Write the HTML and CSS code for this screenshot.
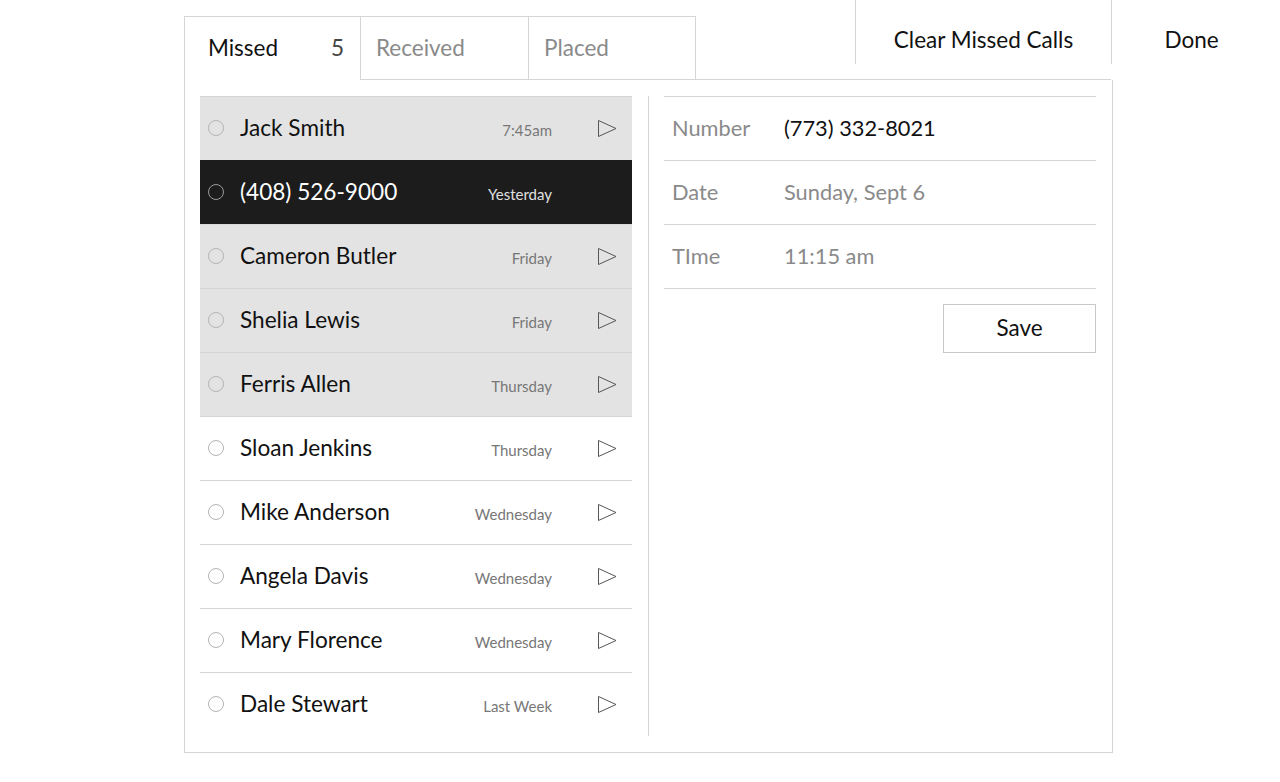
FILE: index.html
```html
<!DOCTYPE html>
<html>
<head>
<meta charset="utf-8">
<link rel="stylesheet" href="styles.css">
</head>
<body>
<div class="app">
  <div class="header">
    <div class="lead"></div>
    <div class="tab tab-active"><span>Missed</span><span class="count">5</span></div>
    <div class="tab tab-mid"><span>Received</span></div>
    <div class="tab tab-last"><span>Placed</span></div>
    <div class="spacer"></div>
    <div class="action-col wide"><div class="action">Clear Missed Calls</div></div>
    <div class="action-col narrow"><div class="action">Done</div></div>
  </div>
  <div class="panel">
    <div class="list">
      <div class="row shaded"><span class="radio"></span><span class="name">Jack Smith</span><span class="when">7:45am</span><svg class="arrow" viewBox="0 0 19 17"><polygon points="0.5,0.5 18,8.5 0.5,16.5"/></svg></div>
      <div class="row selected"><span class="radio"></span><span class="name">(408) 526-9000</span><span class="when">Yesterday</span><span class="arrow"></span></div>
      <div class="row shaded"><span class="radio"></span><span class="name">Cameron Butler</span><span class="when">Friday</span><svg class="arrow" viewBox="0 0 19 17"><polygon points="0.5,0.5 18,8.5 0.5,16.5"/></svg></div>
      <div class="row shaded"><span class="radio"></span><span class="name">Shelia Lewis</span><span class="when">Friday</span><svg class="arrow" viewBox="0 0 19 17"><polygon points="0.5,0.5 18,8.5 0.5,16.5"/></svg></div>
      <div class="row shaded"><span class="radio"></span><span class="name">Ferris Allen</span><span class="when">Thursday</span><svg class="arrow" viewBox="0 0 19 17"><polygon points="0.5,0.5 18,8.5 0.5,16.5"/></svg></div>
      <div class="row"><span class="radio"></span><span class="name">Sloan Jenkins</span><span class="when">Thursday</span><svg class="arrow" viewBox="0 0 19 17"><polygon points="0.5,0.5 18,8.5 0.5,16.5"/></svg></div>
      <div class="row"><span class="radio"></span><span class="name">Mike Anderson</span><span class="when">Wednesday</span><svg class="arrow" viewBox="0 0 19 17"><polygon points="0.5,0.5 18,8.5 0.5,16.5"/></svg></div>
      <div class="row"><span class="radio"></span><span class="name">Angela Davis</span><span class="when">Wednesday</span><svg class="arrow" viewBox="0 0 19 17"><polygon points="0.5,0.5 18,8.5 0.5,16.5"/></svg></div>
      <div class="row"><span class="radio"></span><span class="name">Mary Florence</span><span class="when">Wednesday</span><svg class="arrow" viewBox="0 0 19 17"><polygon points="0.5,0.5 18,8.5 0.5,16.5"/></svg></div>
      <div class="row"><span class="radio"></span><span class="name">Dale Stewart</span><span class="when">Last Week</span><svg class="arrow" viewBox="0 0 19 17"><polygon points="0.5,0.5 18,8.5 0.5,16.5"/></svg></div>
    </div>
    <div class="divider"></div>
    <div class="detail">
      <div class="field"><span class="label">Number</span><span class="value strong">(773) 332-8021</span></div>
      <div class="field"><span class="label">Date</span><span class="value">Sunday, Sept 6</span></div>
      <div class="field"><span class="label">TIme</span><span class="value">11:15 am</span></div>
      <div class="actions"><button class="save">Save</button></div>
    </div>
  </div>
</div>
</body>
</html>
```
FILE: styles.css
```css
* { box-sizing: border-box; }
html, body { margin: 0; padding: 0; background: #fff; }
body {
  width: 1280px;
  height: 782px;
  overflow: hidden;
  font-family: Lato, "Open Sans", sans-serif;
  color: #111;
}
.app { display: flex; flex-direction: column; }
.header { display: flex; height: 80px; }
.lead { width: 184px; }
.tab {
  margin-top: 16px;
  height: 64px;
  border-top: 1px solid #d4d4d4;
  border-left: 1px solid #d4d4d4;
  display: flex;
  align-items: center;
  justify-content: space-between;
  font-size: 22.5px;
  color: #8a8a8a;
  padding-left: 15px;
  padding-bottom: 2px;
}
.tab-active { width: 176px; color: #111; padding-left: 23px; padding-right: 16px; }
.tab-active .count { color: #444; }
.tab-mid { width: 168px; border-bottom: 1px solid #d4d4d4; }
.tab-last { width: 168px; border-bottom: 1px solid #d4d4d4; border-right: 1px solid #d4d4d4; }
.spacer { width: 160px; border-bottom: 1px solid #d4d4d4; margin-left: -1px; }
.action-col { height: 80px; }
.action-col.wide { width: 256px; border-bottom: 1px solid #d4d4d4; }
.action-col.narrow { width: 168px; padding-right: 8px; }
.action {
  height: 64px;
  border-left: 1px solid #d4d4d4;
  display: flex;
  align-items: center;
  justify-content: center;
  font-size: 22.5px;
  color: #111;
  padding-top: 14px;
}
.panel {
  margin-left: 184px;
  width: 929px;
  height: 673px;
  border-left: 1px solid #d4d4d4;
  border-right: 1px solid #d4d4d4;
  border-bottom: 1px solid #d4d4d4;
  padding: 16px 15px 0 15px;
  display: flex;
}
.list { width: 432px; display: flex; flex-direction: column; }
.row {
  height: 64px;
  border-top: 1px solid #d4d4d4;
  display: flex;
  align-items: center;
  padding-left: 8px;
  padding-right: 15px;
  padding-bottom: 3px;
}
.row.shaded { background: #e3e3e3; }
.row.selected { background: #1c1c1c; border-top-color: #1c1c1c; }
.row.selected + .row { border-top-color: #d8d8d8; }
.radio {
  width: 16px;
  height: 16px;
  border-radius: 50%;
  border: 1px solid #b4b4b4;
  background: transparent;
  flex: none;
  margin-right: 16px;
  margin-top: 2px;
}
.row.selected .radio { border-color: #9a9a9a; }
.name { flex: 1; font-size: 22.6px; color: #111; }
.row.selected .name { color: #fff; }
.when { font-size: 15px; color: #777; margin-top: 5px; }
.row.selected .when { color: #e0e0e0; }
.arrow {
  width: 19px;
  height: 17px;
  margin-left: 46px;
  flex: none;
  margin-top: 2px;
}
.arrow polygon { fill: none; stroke: #555; stroke-width: 1; }
.divider { width: 1px; height: 640px; background: #d4d4d4; margin-left: 16px; margin-right: 15px; }
.detail { width: 432px; display: flex; flex-direction: column; }
.field {
  height: 64px;
  border-top: 1px solid #d4d4d4;
  display: flex;
  align-items: center;
  padding-left: 8px;
  padding-bottom: 3px;
  font-size: 21.8px;
}
.field:nth-child(3) { border-bottom: 1px solid #d4d4d4; height: 65px; }
.label { width: 112px; color: #8a8a8a; }
.value { color: #8a8a8a; }
.value.strong { color: #111; }
.actions { display: flex; justify-content: flex-end; padding-top: 15px; }
.save {
  width: 153px;
  height: 49px;
  background: #fff;
  border: 1px solid #c8c8c8;
  font-family: Lato, "Open Sans", sans-serif;
  font-size: 22.5px;
  color: #111;
  padding: 0 0 3px 0;
}
```
